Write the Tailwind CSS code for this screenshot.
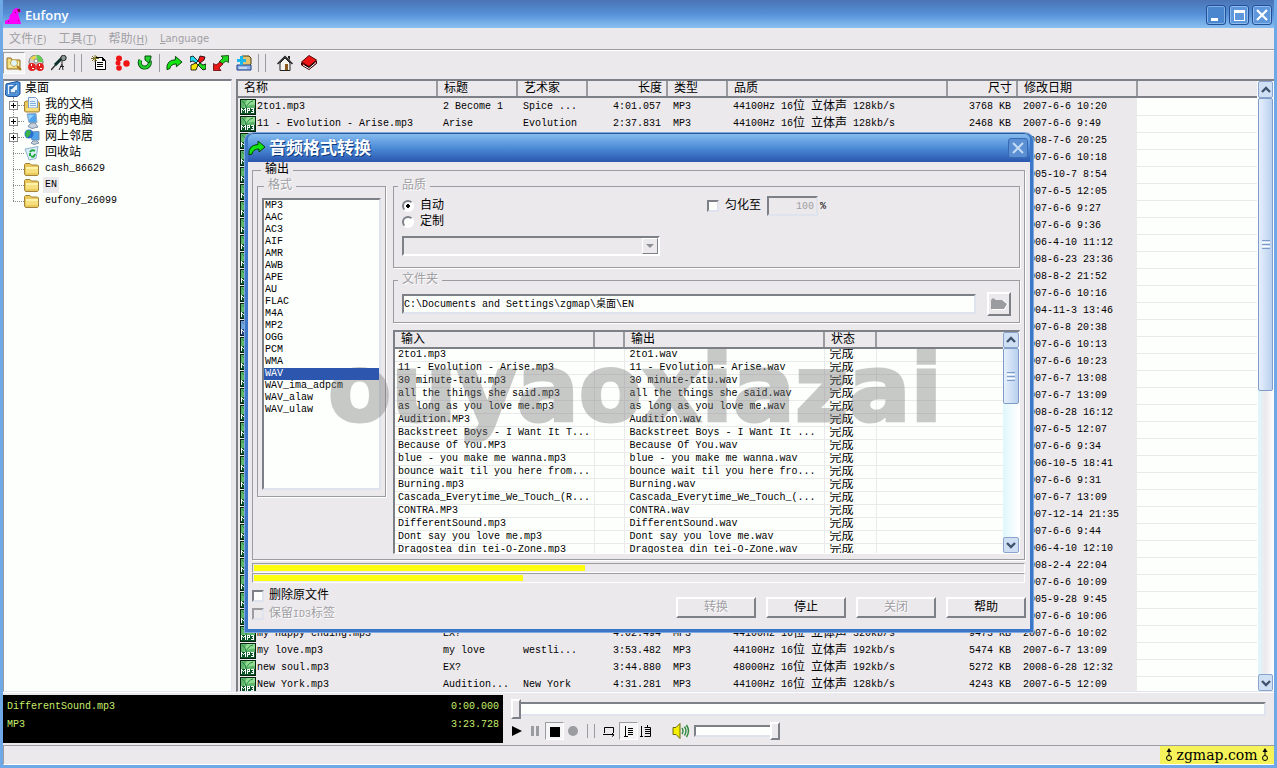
<!DOCTYPE html>
<html lang="zh-CN">
<head>
<meta charset="utf-8">
<title>Eufony</title>
<script src="https://cdn.jsdelivr.net/npm/@tailwindcss/browser@4"></script>
</head>
<body class="h-screen overflow-hidden bg-[#ece9ec] font-['Liberation_Mono','Noto_Sans_CJK_SC',monospace] text-[10px] text-black">

<svg class="hidden" aria-hidden="true">
  <symbol id="mp3" viewBox="0 0 16 16"><path fill="#04240f" d="M0 0h16v16H0z"/><path fill="#5fb56c" d="M1 1h14v8H1z"/><path fill="#8fdc92" d="M7 1h8v5Q9 5 6 9H4Q5 4 7 1z"/><path fill="none" stroke="#2d8446" d="M2 2q4 2 4 7M13 2Q8 3 6 9"/><path fill="#0c5728" d="M1 9h14v6H1z"/><path fill="#fff" shape-rendering="crispEdges" d="M1 9h1v5H1zM2 10h1v1H2zM3 11h1v1H3zM4 10h1v1H4zM5 9h1v5H5zM7 9h1v5H7zM8 9h1v1H8zM9 9h1v3H9zM8 11h1v1H8zM11 9h3v1h-3zM13 9h1v5h-1zM12 11h1v1h-1zM11 13h2v1h-2z"/></symbol>
  <symbol id="folder" viewBox="0 0 16 16"><path fill="#e9c95c" stroke="#a3823a" d="M.5 13V3.500l1-1h4.500l1.500 1.500h6l1 1v8.500l-1 1h-12z"/><path fill="#fdf3ae" d="M2 6h12v3H2z"/><path fill="#f7df7d" d="M2 8h12v4H2z"/></symbol>
  <symbol id="curve" viewBox="0 0 18 16"><path fill="#12e512" stroke="#053f05" stroke-linejoin="round" d="M1 15Q0 5 10 4.500V1l7 6-6 5V9Q5 9 4 14z"/></symbol>
  <symbol id="up" viewBox="0 0 10 8"><path fill="none" stroke="#40536e" stroke-width="2.400" d="M1 6l4-4 4 4"/></symbol>
  <symbol id="down" viewBox="0 0 10 8"><path fill="none" stroke="#40536e" stroke-width="2.400" d="M1 2l4 4 4-4"/></symbol>
</svg>

<div class="relative flex h-full flex-col border-x-3 border-b-3 border-[#6fa8e6]">

  <header class="flex h-7 shrink-0 items-center bg-linear-to-b from-[#4a74b4] via-[#5590d8] to-[#8bc0f0] pr-0.5 pl-0.5">
    <svg class="mt-1 size-4" viewBox="0 0 16 16"><path fill="#f0f" d="M0 13l4-2 1-4 2-2 1-3 3-2 4 1 1 3-3 1 1 4 1 3 1 4H0z"/><path fill="#7a1040" d="M12 1h3v3h-2zM3 13h1v1H3zM13 12h1v1h-1zM10 4h1v1h-1z"/></svg>
    <h1 class="mt-1 ml-1 flex-1 font-['Open_Sans',sans-serif] text-[13px] font-semibold text-white">Eufony</h1>
    <div class="mt-0.5 flex gap-[3px]">
      <button aria-label="最小化" class="size-5 rounded-[3px] border border-[#244f96] bg-[#4a86ce] shadow-[inset_0_0_0_1px_#7fb0e8]"><svg class="size-[18px]" viewBox="0 0 18 18"><path fill="#fff" d="M4 12h7v3H4z"/></svg></button>
      <button aria-label="最大化" class="size-5 rounded-[3px] border border-[#244f96] bg-[#5d96da] shadow-[inset_0_0_0_1px_#8fbcee]"><svg class="size-[18px]" viewBox="0 0 18 18"><path fill="#fff" fill-rule="evenodd" d="M4 4h11v11H4zM5 7v7h9V7z"/></svg></button>
      <button aria-label="关闭窗口" class="size-5 rounded-[3px] border border-[#244f96] bg-[#5d96da] shadow-[inset_0_0_0_1px_#8fbcee]"><svg class="size-[18px]" viewBox="0 0 18 18"><path stroke="#fff" stroke-width="2.200" d="M4 4l10 10M14 4L4 14"/></svg></button>
    </div>
  </header>

  <nav class="flex h-[22px] shrink-0 items-center gap-3 border-b border-[#9a9ca0] pl-1.5 font-['DejaVu_Sans','Noto_Sans_CJK_SC',sans-serif] text-[10px] text-[#a0a0a4]">
    <a href="#"><span class="text-xs">文件</span>(<u>F</u>)</a>
    <a href="#"><span class="text-xs">工具</span>(<u>T</u>)</a>
    <a href="#"><span class="text-xs">帮助</span>(<u>H</u>)</a>
    <a href="#"><u>L</u>anguage</a>
  </nav>

  <div class="flex h-[29px] shrink-0 items-center border-t border-white pb-1">
    <div class="flex items-center">
      <button aria-label="浏览" class="flex h-[22px] w-[22px] items-center justify-center border border-t-[#a0a0a4] border-r-white border-b-white border-l-[#a0a0a4] bg-[#f6f5f6]"><svg class="size-4" viewBox="0 0 16 16"><path fill="#f3dc7c" stroke="#8d6c22" d="M1 14V3h4l1 2h8v9z"/><path fill="#fff6c0" d="M3 12l2-5h8v5z"/><circle cx="8" cy="8" r="3.500" fill="#dff6ff" stroke="#c9a640"/><path stroke="#a9781c" stroke-width="2" d="M11 11l4 4"/></svg></button>
      <button aria-label="CD" class="flex h-[22px] w-[22px] items-center justify-center"><svg class="size-4" viewBox="0 0 16 16"><circle cx="8" cy="7" r="7" fill="#cfcfcf" stroke="#777"/><path fill="#5fcf52" d="M8 0a7 7 0 0 1 7 7H10z"/><path fill="#e9d640" d="M8 0L2 3l5 3z"/><circle cx="8" cy="6" r="2" fill="#fff" stroke="#888"/><circle cx="4" cy="12" r="3.900" fill="#e22020"/><circle cx="12" cy="12" r="3.900" fill="#e22020"/><path fill="#fff" d="M3 9h1v2H3zM11 9h1v2h-1zM4 13h2v1H4zM12 13h2v1h-2z"/></svg></button>
      <button aria-label="录音" class="flex h-[22px] w-6 items-center justify-center"><svg class="size-4" viewBox="0 0 16 16"><path stroke="#333" stroke-width="1.500" d="M0 15l9-10"/><path stroke="#0b2f2b" stroke-width="3" d="M4 10l7-7"/><circle cx="12.500" cy="3" r="2.700" fill="#8a9794" stroke="#222"/><path fill="none" stroke="#222" d="M8 15l3-6 1 6M9 11.500h4M11 9V6"/></svg></button>
      <span class="mx-[3px] h-[18px] w-px bg-[#9a9ca0]"></span><span class="mx-[3px] h-[18px] w-px bg-[#9a9ca0]"></span>
      <button aria-label="新建列表" class="ml-0.5 flex h-[22px] w-[23px] items-center justify-center"><svg class="size-4" viewBox="0 0 16 16"><path fill="#fff" stroke="#000" d="M4.500 2.500h7l3 3v9h-10z"/><path stroke="#000" d="M6 7.500h6M6 9.500h6M6 11.500h6M11.500 2v3.500H14"/><path stroke="#7b7126" d="M4 0v7M0 3.500h8M1 1l5 5M6 1L1 6"/></svg></button>
      <button aria-label="分割" class="flex h-[22px] w-[23px] items-center justify-center"><svg class="size-4" viewBox="0 0 16 16"><g fill="#f01414"><circle cx="5" cy="3.500" r="3"/><circle cx="12.500" cy="8.500" r="3.200"/><circle cx="4" cy="8" r="2.500"/><circle cx="5" cy="13" r="2.800"/></g></svg></button>
      <button aria-label="刷新" class="flex h-[22px] w-[23px] items-center justify-center"><svg class="size-4" viewBox="0 0 16 16"><path fill="none" stroke="#064d10" stroke-width="4" d="M3.500 5a5 5 0 1 0 9 1"/><path fill="none" stroke="#21d32b" stroke-width="2.400" d="M3.500 5a5 5 0 1 0 9 1"/><path fill="#21d32b" stroke="#064d10" d="M8 1h6v1.500L12 8 8 5z"/></svg></button>
      <span class="mx-[3px] h-[18px] w-px bg-[#9a9ca0]"></span>
      <button aria-label="转换格式" class="flex h-[22px] w-[23px] items-center justify-center"><svg class="h-4 w-[17px]"><use href="#curve"/></svg></button>
      <button aria-label="合并" class="flex h-[22px] w-[23px] items-center justify-center"><svg class="size-4" viewBox="0 0 16 16"><g stroke="#000" stroke-width=".8"><path fill="#25d8f0" d="M0 2l3-1 5 5-2 2-3-2-3 1z"/><path fill="#f01414" d="M15 2l-1 3-4 3-2-2 2-5z"/><path fill="#f5e400" d="M1 15v-5l5-2 2 2-2 5z"/><path fill="#1fd81f" d="M16 14l-3 1-5-5 2-2 3 2 3-1z"/></g></svg></button>
      <button aria-label="交换" class="flex h-[22px] w-[23px] items-center justify-center"><svg class="size-4" viewBox="0 0 16 16"><path fill="#1fd81f" stroke="#053f05" stroke-width=".8" d="M15.500.5v7L13 6 9 9 6 7l4-4-2-2z"/><path fill="#e81818" stroke="#5a0505" stroke-width=".8" d="M.5 15.500v-7L3 10l4-3 3 2-4 4 2 2.500z"/></svg></button>
      <button aria-label="数据库" class="flex h-[22px] w-[23px] items-center justify-center"><svg class="size-4" viewBox="0 0 16 16"><path fill="#e3c46e" stroke="#4a3a10" d="M6 1h7l2 2v6l-2 2H6z"/><path fill="#8fb5e8" stroke="#1d3a80" d="M1 10h14v5H1z"/><path stroke="#fff" d="M3 13h8"/><path fill="#18b8ee" d="M4 1h3v3h3v3H7v3H4V7H1V4h3z"/></svg></button>
      <span class="mx-[3px] h-[18px] w-px bg-[#9a9ca0]"></span><span class="mx-[3px] h-[18px] w-px bg-[#9a9ca0]"></span>
      <button aria-label="主页" class="ml-1 flex h-[22px] w-6 items-center justify-center"><svg class="size-4" viewBox="0 0 16 16"><path fill="#f4f4ee" stroke="#222" d="M3 8v7.500h10V8L8 3z"/><path fill="none" stroke="#222" stroke-width="1.500" d="M.5 9L8 1.500 15.500 9"/><path fill="#222" d="M11 1h2v4l-2-2z"/><path fill="#8a5a1e" d="M8 9h3v6H8z"/></svg></button>
      <button aria-label="手册" class="flex h-[22px] w-6 items-center justify-center"><svg class="size-4" viewBox="0 0 16 16"><path fill="#8a0808" stroke="#3a0000" d="M.5 8v2L8 14.500l7.500-6V6z"/><path stroke="#fff" d="M2 10l6 3.500 7-6"/><path fill="#f01414" stroke="#5a0505" d="M.5 7L8 .5 15.500 5 8 11.500z"/></svg></button>
    </div>
  </div>

  <main class="flex min-h-0 flex-1 gap-1">
    <section aria-label="文件夹" class="w-[229px] shrink-0 border-t-2 border-r border-b border-l border-t-[#7d8086] border-r-[#dfe3ee] border-b-[#dfe3ee] border-l-[#9a9ca0] bg-[#fdfffd]">
      <div class="relative">
        <span class="absolute top-4 left-[9px] h-[104px] border-l border-dotted border-[#8a8a8a]"></span>
        <ul id="tree" class="relative"></ul>
      </div>
    </section>

    <section aria-label="曲目" class="flex min-w-0 flex-1 border-t-2 border-b border-l-2 border-[#7d8086] border-b-[#dfe3ee] bg-[#fdfffd]">
      <div class="min-w-0 flex-1 overflow-hidden">
        <table class="w-full table-fixed border-collapse whitespace-pre">
          <colgroup><col class="w-[199px]"><col class="w-20"><col class="w-[70px]"><col class="w-20"><col class="w-[60px]"><col class="w-[220px]"><col class="w-[70px]"><col class="w-[120px]"><col></colgroup>
          <thead><tr id="trackHead" class="h-4 text-xs leading-[14px]"></tr></thead>
          <tbody id="tracks"></tbody>
        </table>
      </div>
      <div class="flex w-[17px] flex-col border-x border-white bg-linear-to-r from-[#dff7fb] via-[#ece9ec] to-white" aria-hidden="true">
        <span class="flex h-[17px] items-center justify-center rounded-xs border border-[#8aa3cc] bg-[#cfe0f4]"><svg class="h-2 w-2.5"><use href="#up"/></svg></span>
        <span class="flex h-[293px] flex-col items-center justify-center gap-px rounded-xs border border-[#7f9cc8] bg-linear-to-r from-[#e6f0fc] to-[#b9d0ee]"><i class="h-px w-2 bg-[#7f9cc8]"></i><i class="h-px w-2 bg-white"></i><i class="h-px w-2 bg-[#7f9cc8]"></i><i class="h-px w-2 bg-white"></i><i class="h-px w-2 bg-[#7f9cc8]"></i></span>
        <span class="mt-auto flex h-[17px] items-center justify-center rounded-xs border border-[#8aa3cc] bg-[#cfe0f4]"><svg class="h-2 w-2.5"><use href="#down"/></svg></span>
      </div>
    </section>
  </main>

  <section aria-label="播放器" class="flex h-[53px] shrink-0 gap-2 border-t border-white pt-0.5 pb-0.5">
    <div class="flex h-12 w-[500px] shrink-0 flex-col bg-black px-1 pt-0.5 text-[#c8ee6c]">
      <p class="flex h-[18px] items-center justify-between"><span>DifferentSound.mp3</span><span>0:00.000</span></p>
      <p class="flex h-[18px] items-center justify-between"><span>MP3</span><span>3:23.728</span></p>
    </div>
    <div class="flex min-w-0 flex-1 flex-col pt-1 pr-2">
      <input type="range" aria-label="播放位置" value="0" class="block h-5 w-full appearance-none bg-transparent [&::-webkit-slider-runnable-track]:h-3.5 [&::-webkit-slider-runnable-track]:border-2 [&::-webkit-slider-runnable-track]:border-t-[#7d8086] [&::-webkit-slider-runnable-track]:border-l-[#7d8086] [&::-webkit-slider-runnable-track]:border-r-[#dfe3ee] [&::-webkit-slider-runnable-track]:border-b-[#dfe3ee] [&::-webkit-slider-runnable-track]:bg-[#fdfffd] [&::-webkit-slider-thumb]:-mt-[5px] [&::-webkit-slider-thumb]:-ml-0.5 [&::-webkit-slider-thumb]:h-5 [&::-webkit-slider-thumb]:w-2.5 [&::-webkit-slider-thumb]:appearance-none [&::-webkit-slider-thumb]:border-2 [&::-webkit-slider-thumb]:border-t-white [&::-webkit-slider-thumb]:border-l-white [&::-webkit-slider-thumb]:border-r-[#7d8086] [&::-webkit-slider-thumb]:border-b-[#7d8086] [&::-webkit-slider-thumb]:bg-[#ece9ec]">
      <div class="flex h-6 items-center">
        <button aria-label="播放" class="w-[18px]"><svg class="h-3 w-3" viewBox="0 0 12 12"><path d="M1 1l10 5-10 5z"/></svg></button>
        <button aria-label="暂停" class="w-4"><svg class="h-3 w-3" viewBox="0 0 12 12"><path fill="#9a9ca0" d="M2 1h3v10H2zM7 1h3v10H7z"/></svg></button>
        <button aria-label="停止播放" class="flex h-[18px] w-[19px] items-center justify-center border border-t-[#9a9ca0] border-r-white border-b-white border-l-[#9a9ca0] bg-[#f6f5f6]"><i class="mt-0.5 size-2.5 bg-black"></i></button>
        <button aria-label="录制" class="ml-1 w-3"><i class="block size-2.5 rounded-full bg-[#9a9ca0]"></i></button>
        <span class="mr-[3px] ml-[7px] h-3.5 w-px bg-[#9a9ca0]"></span><span class="mx-[3px] h-3.5 w-px bg-[#9a9ca0]"></span>
        <button aria-label="循环" class="ml-[5px] w-[18px]"><svg class="h-3 w-3" viewBox="0 0 12 12"><path fill="none" stroke="#000" d="M1.500 8V2.500h9V8M0 9.500h4M9 8l2 2-2 1.500M4 9.500h7"/></svg></button>
        <button aria-label="顺序" class="-ml-0.5 flex h-[18px] w-[19px] items-center justify-center border border-t-[#9a9ca0] border-r-white border-b-white border-l-[#9a9ca0] bg-[#f6f5f6]"><svg class="h-3 w-3" viewBox="0 0 12 12"><path fill="none" stroke="#000" d="M2.500 1v10M1 11.500h4M5 3.500h5M5 5.500h5M5 7.500h5M5 9.500h5"/></svg></button>
        <button aria-label="列表循环" class="ml-0.5 w-3"><svg class="h-3 w-3" viewBox="0 0 12 12"><path fill="none" stroke="#000" d="M1.500 1v10M0 11.500h3M4.500 2.500h6v9h-6M7.500 0v2M5 4.500h5M5 6.500h5M5 8.500h5"/></svg></button>
        <svg class="ml-5 h-4 w-[18px]" viewBox="0 0 18 16"><path fill="#f5f000" stroke="#6d6a10" d="M1 4.500h3l4-4v15l-4-4H1z"/><path fill="none" stroke="#2f8a3a" stroke-width="1.400" d="M10 5q2 3 0 6M12.500 3.500q3 4.500 0 9M14.500 2q4 6 0 12"/></svg>
        <input type="range" aria-label="音量" value="100" class="ml-1 block h-5 w-[86px] appearance-none bg-transparent [&::-webkit-slider-runnable-track]:h-3 [&::-webkit-slider-runnable-track]:border-2 [&::-webkit-slider-runnable-track]:border-t-[#7d8086] [&::-webkit-slider-runnable-track]:border-l-[#7d8086] [&::-webkit-slider-runnable-track]:border-r-[#dfe3ee] [&::-webkit-slider-runnable-track]:border-b-[#dfe3ee] [&::-webkit-slider-runnable-track]:bg-[#fdfffd] [&::-webkit-slider-thumb]:-mt-[5px] [&::-webkit-slider-thumb]:ml-0.5 [&::-webkit-slider-thumb]:h-[18px] [&::-webkit-slider-thumb]:w-2.5 [&::-webkit-slider-thumb]:appearance-none [&::-webkit-slider-thumb]:border-2 [&::-webkit-slider-thumb]:border-t-white [&::-webkit-slider-thumb]:border-l-white [&::-webkit-slider-thumb]:border-r-[#7d8086] [&::-webkit-slider-thumb]:border-b-[#7d8086] [&::-webkit-slider-thumb]:bg-[#ece9ec]">
      </div>
    </div>
  </section>

  <footer class="flex h-5 shrink-0 justify-end border-t border-b border-l border-[#9a9ca0] border-b-white">
    <div class="flex w-[114px] items-center justify-center gap-1 bg-[#f5f25a] font-['DejaVu_Serif',serif] text-sm text-black">
      <svg class="h-3.5 w-2" viewBox="0 0 8 14"><path d="M4 0L1.500 4h5z"/><path fill="none" stroke="#000" d="M4 3v5"/><circle cx="4" cy="10" r="2.500" fill="none" stroke="#000"/></svg>
      <span>zgmap.com</span>
      <svg class="h-3.5 w-2" viewBox="0 0 8 14"><path d="M4 0L1.500 4h5z"/><path fill="none" stroke="#000" d="M4 3v5"/><circle cx="4" cy="10" r="2.500" fill="none" stroke="#000"/></svg>
    </div>
  </footer>

  <div role="dialog" aria-labelledby="dlgTitle" class="absolute top-[133px] left-[242px] w-[788px] rounded-t-lg border-x-3 border-b-3 border-[#3b76c8] bg-[#ece9ec] shadow-[0_0_0_1px_#7fa9dd]">
    <div class="flex h-[29px] items-center rounded-t-md border-t border-[#2a5799] bg-linear-to-b from-[#86bbee] via-[#4c8bd6] to-[#2a56ae] pr-0.5">
      <svg class="h-4 w-[18px]"><use href="#curve"/></svg>
      <h2 id="dlgTitle" class="ml-[3px] flex-1 pt-1 text-[17px] leading-5 font-bold text-white [text-shadow:1px_1px_0_#123a7c]">音频格式转换</h2>
      <button aria-label="关闭对话框" class="size-5 rounded-[3px] border border-[#3a69b4] bg-[#5a8fd4]"><svg class="size-[18px]" viewBox="0 0 18 18"><path stroke="#c5dcf5" stroke-width="2" d="M4 4l10 10M14 4L4 14"/></svg></button>
    </div>

    <div class="flex flex-col pr-[5px] pb-1.5 pl-1">
      <fieldset class="flex gap-[7px] border border-[#9a9ca0] px-1 pb-[5px] shadow-[1px_1px_0_#fff]">
        <legend class="ml-1 bg-[#ece9ec] px-1 text-xs leading-4">输出</legend>

        <fieldset class="w-[129px] shrink-0 self-start border border-[#9a9ca0] px-1 pt-1 pb-1.5 shadow-[1px_1px_0_#fff]">
          <legend class="ml-0.5 bg-[#ece9ec] px-1 text-xs leading-4 text-[#a0a0a4] [text-shadow:1px_1px_0_#fff]">格式</legend>
          <ul id="formats" role="listbox" class="h-[292px] border-2 border-t-[#7d8086] border-r-[#dfe3ee] border-b-[#dfe3ee] border-l-[#7d8086] bg-[#fdfffd]"></ul>
        </fieldset>

        <div class="flex min-w-0 flex-1 flex-col">
          <fieldset class="border border-[#9a9ca0] px-2 pt-1 pb-[11px] shadow-[1px_1px_0_#fff]">
            <legend class="-ml-1 bg-[#ece9ec] px-1 text-xs leading-4 text-[#a0a0a4] [text-shadow:1px_1px_0_#fff]">品质</legend>
            <div class="flex items-start">
              <div class="w-[305px]">
                <label class="flex h-4 items-center gap-1.5 text-xs leading-4"><input type="radio" name="q" checked class="size-3 appearance-none rounded-full border-2 border-t-[#7d8086] border-r-white border-b-white border-l-[#7d8086] bg-[#fdfffd] bg-[radial-gradient(#000_2px,transparent_2px)]">自动</label>
                <label class="flex h-4 items-center gap-1.5 text-xs leading-4"><input type="radio" name="q" class="size-3 appearance-none rounded-full border-2 border-t-[#7d8086] border-r-white border-b-white border-l-[#7d8086] bg-[#fdfffd]">定制</label>
              </div>
              <div class="flex h-4 items-center">
                <label class="flex items-center gap-1.5 text-xs leading-4"><input type="checkbox" class="size-3 appearance-none border-2 border-t-[#7d8086] border-r-[#dfe3ee] border-b-[#dfe3ee] border-l-[#7d8086] bg-[#fdfffd]">匀化至</label>
                <input type="text" aria-label="匀化百分比" value="100" disabled class="ml-1.5 h-5 w-[51px] border-2 border-t-[#7d8086] border-r-[#dfe3ee] border-b-[#dfe3ee] border-l-[#7d8086] bg-[#ece9ec] px-0.5 text-right text-[#a0a0a4]">
                <span class="ml-0.5">%</span>
              </div>
            </div>
            <div class="mt-1.5 flex h-5 w-[258px] border-2 border-t-[#7d8086] border-r-white border-b-white border-l-[#7d8086]">
              <select aria-label="定制品质" disabled class="min-w-0 flex-1 appearance-none bg-[#ece9ec]"><option></option></select>
              <span class="flex w-4 items-center justify-center border border-t-white border-r-[#7d8086] border-b-[#7d8086] border-l-white"><svg class="h-1.5 w-2" viewBox="0 0 8 6"><path fill="#8d9096" d="M0 1h8L4 5z"/></svg></span>
            </div>
          </fieldset>

          <fieldset class="mt-1 border border-[#9a9ca0] px-2 pt-1 pb-1.5 shadow-[1px_1px_0_#fff]">
            <legend class="-ml-1 bg-[#ece9ec] px-1 text-xs leading-4 text-[#a0a0a4] [text-shadow:1px_1px_0_#fff]">文件夹</legend>
            <div class="flex h-6 items-center gap-[11px]">
              <div class="flex h-5 flex-1 items-center border-2 border-t-[#7d8086] border-r-[#dfe3ee] border-b-[#dfe3ee] border-l-[#7d8086] bg-[#fdfffd]">
                <input type="text" aria-label="输出文件夹" value="C:\Documents and Settings\zgmap\桌面\EN" class="w-full bg-transparent">
              </div>
              <button aria-label="选择文件夹" disabled class="flex size-6 items-center justify-center border-2 border-t-white border-r-[#7d8086] border-b-[#7d8086] border-l-white"><svg class="h-3 w-[18px]" viewBox="0 0 18 12"><path fill="#fff" d="M2 12V3l2-2 4 1h6l4 4-3 6z"/><path fill="#9a9ca0" d="M1 11V2l2-2 3 2h6l5 4-3 5z"/></svg></button>
            </div>
          </fieldset>

          <div class="mt-[7px] flex h-[224px] border-t-2 border-r border-b border-l-2 border-[#7d8086] border-r-white border-b-white bg-[#fdfffd]">
            <div class="min-w-0 flex-1 overflow-hidden">
              <table class="w-full table-fixed border-collapse whitespace-pre">
                <colgroup><col class="w-[199px]"><col class="w-[30px]"><col class="w-[200px]"><col class="w-[52px]"><col></colgroup>
                <thead><tr id="jobHead" class="h-4 text-xs leading-[14px]"></tr></thead>
                <tbody id="jobs"></tbody>
              </table>
            </div>
            <div class="flex w-4 flex-col bg-linear-to-r from-[#dff7fb] to-white" aria-hidden="true">
              <span class="flex h-4 items-center justify-center rounded-xs border border-[#8aa3cc] bg-[#cfe0f4]"><svg class="h-2 w-2.5"><use href="#up"/></svg></span>
              <span class="flex h-14 flex-col items-center justify-center gap-px rounded-xs border border-[#7f9cc8] bg-linear-to-r from-[#e6f0fc] to-[#b9d0ee]"><i class="h-px w-2 bg-[#7f9cc8]"></i><i class="h-px w-2 bg-white"></i><i class="h-px w-2 bg-[#7f9cc8]"></i><i class="h-px w-2 bg-white"></i><i class="h-px w-2 bg-[#7f9cc8]"></i></span>
              <span class="mt-auto flex h-4 items-center justify-center rounded-xs border border-[#8aa3cc] bg-[#cfe0f4]"><svg class="h-2 w-2.5"><use href="#down"/></svg></span>
            </div>
          </div>
        </div>
      </fieldset>

      <div role="progressbar" aria-label="当前文件" aria-valuenow="43" class="mt-[3px] h-2.5 border border-t-[#9a9ca0] border-r-white border-b-white border-l-[#9a9ca0] p-px"><div class="h-full bg-[#ffff10]" style="width:43%"></div></div>
      <div role="progressbar" aria-label="总进度" aria-valuenow="35" class="h-2.5 border border-t-[#9a9ca0] border-r-white border-b-white border-l-[#9a9ca0] p-px"><div class="h-full bg-[#ffff10]" style="width:35%"></div></div>

      <div class="mt-1 flex items-start justify-between">
        <div>
          <label class="flex h-[18px] items-center gap-[5px] text-xs leading-4"><input type="checkbox" class="size-3 appearance-none border-2 border-t-[#7d8086] border-r-[#dfe3ee] border-b-[#dfe3ee] border-l-[#7d8086] bg-[#fdfffd]">删除原文件</label>
          <label class="flex h-[18px] items-center gap-[5px] text-xs leading-4 text-[#a0a0a4] [text-shadow:1px_1px_0_#fff]"><input type="checkbox" disabled class="size-3 appearance-none border-2 border-t-[#9a9ca0] border-r-[#dfe3ee] border-b-[#dfe3ee] border-l-[#9a9ca0]"><span>保留<span class="text-[10px]">ID3</span>标签</span></label>
        </div>
        <div class="mt-2.5 -mr-px flex gap-2.5 text-xs">
          <button disabled class="h-[21px] w-20 border-2 border-t-white border-r-[#7d8086] border-b-[#7d8086] border-l-white leading-4 text-[#a0a0a4] [text-shadow:1px_1px_0_#fff]">转换</button>
          <button class="h-[21px] w-20 border-2 border-t-white border-r-[#7d8086] border-b-[#7d8086] border-l-white leading-4">停止</button>
          <button disabled class="h-[21px] w-20 border-2 border-t-white border-r-[#7d8086] border-b-[#7d8086] border-l-white leading-4 text-[#a0a0a4] [text-shadow:1px_1px_0_#fff]">关闭</button>
          <button class="h-[21px] w-20 border-2 border-t-white border-r-[#7d8086] border-b-[#7d8086] border-l-white leading-4">帮助</button>
        </div>
      </div>
    </div>

    <p class="pointer-events-none absolute top-[203px] left-20 z-10 font-['DejaVu_Sans',sans-serif] text-[92px] leading-[108px] font-bold text-[#757575] opacity-39 [-webkit-text-stroke:3px_#757575]">ouyaoxiazai</p>
  </div>
</div>

<script>
const cjk = s => s.replace(/[\u4e00-\u9fff]+/g, m => `<span class="align-[-1px] text-xs leading-[0]">${m}</span>`);
const put = (id, html) => { document.getElementById(id).innerHTML = html; };

/* folder tree */
const icons = {
  desktop: '<svg class="size-4 shrink-0" viewBox="0 0 16 16"><path fill="#4d93dc" stroke="#1f4f96" d="M1 3l11-2.500 3 1V13l-3 2.500H3L.5 14z"/><path fill="#e8f3fc" d="M3 4h9v9H3z"/><path fill="none" stroke="#2b6cb4" stroke-width="1.500" d="M11 3L6 8M8 6L5 6v6h6V9"/></svg>',
  docs: '<svg class="size-4 shrink-0" viewBox="0 0 16 16"><path fill="#e9c95c" stroke="#a3823a" d="M.5 14V5l2-1h11l2 2v8l-1 1h-13z"/><path fill="#eaf4ff" stroke="#7a9cc8" d="M4.500.5h7l2 2V11h-9z"/><path stroke="#7fb0e0" d="M6 4.500h5M6 6.500h6M6 8.500h6"/><path fill="#f7df7d" d="M2 11h12v3H2z"/></svg>',
  pc: '<svg class="size-4 shrink-0" viewBox="0 0 16 16"><path fill="#4fa4ec" stroke="#8fa9c4" d="M3 1l9-.5 1 9H5z"/><path fill="#8fd0ff" d="M4 2l6 0-5 5z"/><path fill="#c8d3df" stroke="#7d8fa3" d="M7 10h4l3 4-6 1.500-4-2z"/></svg>',
  net: '<svg class="size-4 shrink-0" viewBox="0 0 16 16"><path fill="#4fa4ec" stroke="#6f8db4" d="M6 3l9-.5V11H8z"/><path fill="#c8d3df" stroke="#7d8fa3" d="M9 12h4l2 2-5 1.500-3-1.500z"/><circle cx="5" cy="5" r="4.500" fill="#2a6fd0"/><path fill="#39b54a" d="M3 1l4 1-1 4-3 3-2-4z"/></svg>',
  bin: '<svg class="size-4 shrink-0" viewBox="0 0 16 16"><path fill="#d8ecf8" stroke="#93b4cc" d="M1 4l13-2.500-2 12L5 15z"/><path fill="none" stroke="#1faa3c" stroke-width="2" d="M6 7q2-3 5-1M11 9q-1 4-4 2M6 8v3"/></svg>',
  folder: '<svg class="size-4 shrink-0"><use href="#folder"/></svg>'
};
const nodes = [['docs','我的文档',1],['pc','我的电脑',1],['net','网上邻居',1],['bin','回收站',0],['folder','cash_86629',0],['folder','EN',0],['folder','eufony_26099',0]];
put('tree', `<li class="flex h-4 items-center gap-1 pl-px">${icons.desktop}<span class="leading-4">${cjk('桌面')}</span></li>` +
  nodes.map(([i, t, x]) => `<li class="flex h-4 items-center pl-[5px]">` +
    (x ? '<button class="flex size-[9px] items-center justify-center border border-[#8a8a8a] bg-white" aria-label="展开"><svg class="size-[5px]" viewBox="0 0 5 5"><path d="M2 0h1v5H2zM0 2h5v1H0z"/></svg></button><i class="w-1.5 border-t border-dotted border-[#8a8a8a]"></i>' : '<i class="ml-1 w-[11px] border-t border-dotted border-[#8a8a8a]"></i>') +
    icons[i] + `<span class="${t === 'EN' ? 'ml-[3px] bg-[#ece9ec] px-0.5 leading-4' : 'ml-[3px] px-0.5 leading-4'}">${cjk(t)}</span></li>`).join(''));

/* track list */
const thLeft = 'border-r-2 border-b-2 border-r-[#9a9ca0] border-b-[#7d8086] bg-[#ece9ec] px-1.5 pt-px text-left font-normal';
const thRight = 'border-r-2 border-b-2 border-r-[#9a9ca0] border-b-[#7d8086] bg-[#ece9ec] px-1 pt-px text-right font-normal';
const thEnd = 'border-b-2 border-b-[#7d8086] bg-[#ece9ec]';
put('trackHead', [['名称',0],['标题',0],['艺术家',0],['长度',1],['类型',0],['品质',0],['尺寸',1],['修改日期',0]]
  .map(([t, r]) => `<th class="${r ? thRight : thLeft}">${t}</th>`).join('') + `<th class="${thEnd}"></th>`);

const names = ['2to1','11 - Evolution - Arise','30 minute-tatu','all the things she said','as long as you love me','Audition','Backstreet Boys - I Want It That Way','Because Of You','blue - you make me wanna','bounce wait til you here from me','Burning','Cascada_Everytime_We_Touch_(Remix)','CONTRA','DifferentSound','Dont say you love me','Dragostea din tei-O-Zone'];
const dates = ['2007-6-6 10:20','2007-6-6 9:49','2008-7-6 20:25','2007-6-6 10:18','2005-10-7 8:54','2007-6-5 12:05','2007-6-6 9:27','2007-6-6 9:36','2006-4-10 11:12','2008-6-23 23:36','2008-8-2 21:52','2007-6-6 10:16','2004-11-3 13:46','2007-6-8 20:38','2007-6-6 10:13','2007-6-6 10:23','2007-6-7 13:08','2007-6-7 13:09','2008-6-28 16:12','2007-6-5 12:07','2007-6-6 9:34','2006-10-5 18:41','2007-6-6 9:31','2007-6-7 13:09','2007-12-14 21:35','2007-6-6 9:44','2006-4-10 12:10','2008-2-4 22:04','2007-6-6 10:09','2005-9-28 9:45','2007-6-6 10:06','2007-6-6 10:02','2007-6-7 13:09','2008-6-28 12:32','2007-6-5 12:09'];
const info = {
  0: ['2to1.mp3','2 Become 1','Spice ...','4:01.057','44100Hz 16位 立体声 128kb/s','3768 KB'],
  1: ['11 - Evolution - Arise.mp3','Arise','Evolution','2:37.831','44100Hz 16位 立体声 128kb/s','2468 KB'],
  31: ['my happy ending.mp3','EX?','','4:02.494','44100Hz 16位 立体声 320kb/s','9473 KB'],
  32: ['my love.mp3','my love','westli...','3:53.482','44100Hz 16位 立体声 192kb/s','5474 KB'],
  33: ['new soul.mp3','EX?','','3:44.880','48000Hz 16位 立体声 192kb/s','5272 KB'],
  34: ['New York.mp3','Audition...','New York','4:31.281','44100Hz 16位 立体声 128kb/s','4243 KB']
};
put('tracks', dates.map((d, i) => {
  const r = info[i] || ['', '', '', '', '', ''];
  const td = 'overflow-hidden bg-[#ece9ec] px-1.5 pt-px pb-0';
  const tdR = 'overflow-hidden bg-[#ece9ec] px-1.5 pt-px pb-0 text-right';
  return `<tr class="h-[17px] leading-4"><td class="overflow-hidden bg-[#ece9ec] p-0"><div class="flex h-[17px] items-end gap-px pl-0.5"><svg class="${i === 13 ? 'size-4 shrink-0 hue-rotate-90' : 'size-4 shrink-0'}"><use href="#mp3"/></svg><span>${r[0]}</span></div></td>` +
    `<td class="${td}">${r[1]}</td><td class="${td}">${r[2]}</td><td class="${tdR}">${r[3]}</td><td class="${td}">${r[3] ? 'MP3' : ''}</td><td class="${td}">${cjk(r[4])}</td><td class="${tdR}">${r[5]}</td><td class="${td}">${d}</td><td class="border-b border-[#ece9ec] p-0"></td></tr>`;
}).join(''));

/* format list */
put('formats', ['MP3','AAC','AC3','AIF','AMR','AWB','APE','AU','FLAC','M4A','MP2','OGG','PCM','WMA','WAV','WAV_ima_adpcm','WAV_alaw','WAV_ulaw']
  .map(f => f === 'WAV' ? '<li role="option" aria-selected="true" class="relative z-20 bg-[#2d57ae] px-px leading-3 text-white">WAV</li>' : `<li role="option" class="px-px leading-3">${f}</li>`).join(''));

/* conversion queue */
put('jobHead', ['输入','','输出','状态'].map(t => `<th class="${thLeft}">${t}</th>`).join('') + `<th class="${thEnd}"></th>`);
const cut = (s, n) => s.length > n ? s.slice(0, n - 3) + '...' : s;
const upper = [5, 7, 12];
put('jobs', names.map((n, i) => {
  const td = 'overflow-hidden border-r border-b border-[#ece9ec] p-0 pl-[3px]';
  const td2 = 'overflow-hidden border-r border-b border-[#ece9ec] p-0 pl-[5px]';
  return `<tr class="h-[13px] leading-3"><td class="${td}">${cut(n + (upper.includes(i) ? '.MP3' : '.mp3'), 32)}</td><td class="${td}"></td><td class="${td2}">${cut(n + '.wav', 31)}</td><td class="${td2}">${cjk('完成')}</td><td class="border-b border-[#ece9ec] p-0"></td></tr>`;
}).join(''));
</script>
</body>
</html>
